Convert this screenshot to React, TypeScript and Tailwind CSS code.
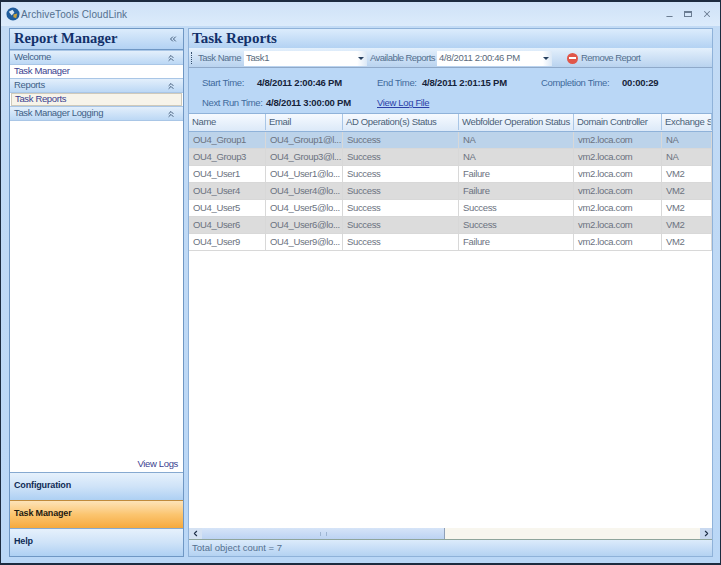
import { ChevronLeft, ChevronRight, ChevronsLeft, ChevronsUp, Minus, X } from 'lucide-react';

const columns = [
    { title: 'Name', width: 'w-[77px]' },
    { title: 'Email', width: 'w-[77px]' },
    { title: 'AD Operation(s) Status', width: 'w-[116px]' },
    { title: 'Webfolder Operation Status', width: 'w-[115px]' },
    { title: 'Domain Controller', width: 'w-[88px]' },
    { title: 'Exchange S', width: 'w-[50px]' },
];

const rows = [
    ['OU4_Group1', 'OU4_Group1@l...', 'Success', 'NA', 'vm2.loca.com', 'NA'],
    ['OU4_Group3', 'OU4_Group3@l...', 'Success', 'NA', 'vm2.loca.com', 'NA'],
    ['OU4_User1', 'OU4_User1@lo...', 'Success', 'Failure', 'vm2.loca.com', 'VM2'],
    ['OU4_User4', 'OU4_User4@lo...', 'Success', 'Failure', 'vm2.loca.com', 'VM2'],
    ['OU4_User5', 'OU4_User5@lo...', 'Success', 'Success', 'vm2.loca.com', 'VM2'],
    ['OU4_User6', 'OU4_User6@lo...', 'Success', 'Success', 'vm2.loca.com', 'VM2'],
    ['OU4_User9', 'OU4_User9@lo...', 'Success', 'Failure', 'vm2.loca.com', 'VM2'],
];

function GroupHeader({ title }: { title: string }) {
    return (
        <div className="flex h-[15px] items-center justify-between border-y border-[#a9c6e6] bg-gradient-to-b from-[#e3effb] to-[#bcd8f5] pl-1 pr-[7px] text-[#3f5f86]">
            <span>{title}</span>
            <ChevronsUp size={10} strokeWidth={2} className="text-[#27405f]" />
        </div>
    );
}

function OutlookButton({ title, active }: { title: string; active?: boolean }) {
    return (
        <div
            className={`flex h-[28px] items-center border-t px-[4px] pb-[2px] text-[9px] font-bold tracking-[-0.15px] ${
                active
                    ? 'border-[#c08a3c] bg-gradient-to-b from-[#fde3b8] via-[#fbc56f] to-[#f6a93a] text-[#1f1a10]'
                    : 'border-[#86a9d0] bg-gradient-to-b from-[#e6f1fc] via-[#cfe3f8] to-[#aed0f3] text-[#0e2a55]'
            }`}
        >
            {title}
        </div>
    );
}

function InfoLabel({ label, value, labelClass, valueClass }: { label: string; value: string; labelClass: string; valueClass: string }) {
    return (
        <div className="flex items-center whitespace-nowrap">
            <span className={`${labelClass} text-[#3f6a9c]`}>{label}</span>
            <span className={`${valueClass} font-bold tracking-[-0.2px] text-[#16233a]`}>{value}</span>
        </div>
    );
}

export default function App() {
    return (
        <div className="flex h-[565px] w-[721px] flex-col overflow-hidden border-y-2 border-x border-[#1c2b3f] bg-gradient-to-b from-[#c3dbf5] to-[#bad7f6] font-['Liberation_Sans',sans-serif] text-[9.5px] tracking-[-0.35px]">
            {/* Title bar */}
            <div className="flex h-[24px] shrink-0 items-center justify-between bg-gradient-to-b from-[#cfe2f7] to-[#dcebfb] pl-[5px] pr-[8px]">
                <div className="flex items-center gap-[1px]">
                    <svg width="14" height="14" viewBox="0 0 15 15">
                        <circle cx="7.5" cy="7.5" r="7" fill="#1f5d9c" />
                        <path d="M3 5 L7 3 L9 6 L6 9 Z" fill="#d9e8f5" />
                        <path d="M8 8 L12 7 L11 12 L8 11 Z" fill="#c9a13b" />
                    </svg>
                    <span className="text-[10px] tracking-[0.1px] text-[#54708f]">ArchiveTools CloudLink</span>
                </div>
                <div className="flex items-center gap-[10px] text-[#6b7d92]">
                    <Minus size={9} strokeWidth={3} className="mt-1" />
                    <div className="h-[6px] w-[8px] border border-t-2 border-[#6b7d92]" />
                    <X size={10} strokeWidth={2.5} />
                </div>
            </div>

            <div className="flex min-h-0 flex-1 gap-[4px] pb-[6px] pl-[8px] pr-[7px] pt-[2px]">
                {/* Left panel */}
                <div className="flex w-[175px] shrink-0 flex-col border border-[#6f97c4] bg-white">
                    <div className="flex h-[20px] shrink-0 items-center justify-between bg-gradient-to-b from-[#dcecfc] to-[#b3d2f3] pl-[4px] pr-[5px]">
                        <span className="font-['Liberation_Serif',serif] text-[14.5px] font-bold tracking-normal text-[#12306a]">Report Manager</span>
                        <ChevronsLeft size={10} strokeWidth={2} className="text-[#27405f]" />
                    </div>
                    <div className="h-px bg-[#6f97c4]" />
                    <GroupHeader title="Welcome" />
                    <div className="flex h-[13px] items-center pl-1 text-[#3b3f8f]">Task Manager</div>
                    <GroupHeader title="Reports" />
                    <div className="mx-px flex h-[13px] items-center border border-[#cfcabb] bg-[#f7f4ea] pl-[3px] text-[#3b3f8f]">Task Reports</div>
                    <GroupHeader title="Task Manager Logging" />
                    <div className="flex flex-1 items-end justify-end pb-[1px] pr-[5px]">
                        <span className="text-[#3b3f8f]">View Logs</span>
                    </div>
                    <OutlookButton title="Configuration" />
                    <OutlookButton title="Task Manager" active />
                    <OutlookButton title="Help" />
                </div>

                {/* Right panel */}
                <div className="flex min-w-0 flex-1 flex-col border border-[#8fb2d9] bg-[#bad7f6]">
                    <div className="flex h-[19px] shrink-0 items-center bg-gradient-to-b from-[#dcecfc] to-[#b3d2f3] pl-[3px]">
                        <span className="font-['Liberation_Serif',serif] text-[15px] font-bold tracking-normal text-[#12306a]">Task Reports</span>
                    </div>
                    {/* Toolbar */}
                    <div className="flex h-[20px] shrink-0 items-center border-b border-[#8fa9c9] bg-gradient-to-b from-[#e4f0fc] to-[#b9d3ef] pl-[2px] pt-[1px] text-[#54708f]">
                        <div className="mr-[6px] h-[12px] w-px border-l border-dotted border-[#35506f]" />
                        <span className="w-[46px] tracking-[-0.5px]">Task Name</span>
                        <div className="flex h-[15px] w-[123px] items-center justify-between bg-gradient-to-r from-white from-[92%] to-[#dbe8f6] pl-[2px] pr-[3px] text-[#5a6a7c]">
                            <span>Task1</span>
                            <span className="h-0 w-0 border-x-[3px] border-t-[3px] border-x-transparent border-t-[#27405f]" />
                        </div>
                        <span className="ml-[3px] w-[67px] whitespace-nowrap tracking-[-0.55px]">Available Reports</span>
                        <div className="flex h-[15px] w-[115px] items-center justify-between bg-gradient-to-r from-white from-[92%] to-[#dbe8f6] pl-[2px] pr-[3px] text-[#5a6a7c]">
                            <span>4/8/2011 2:00:46 PM</span>
                            <span className="h-0 w-0 border-x-[3px] border-t-[3px] border-x-transparent border-t-[#27405f]" />
                        </div>
                        <div className="ml-[15px] flex items-center gap-[3px]">
                            <span className="flex h-[11px] w-[11px] items-center justify-center rounded-full bg-[#e0574a]">
                                <span className="h-[2px] w-[7px] bg-white" />
                            </span>
                            <span className="tracking-[-0.55px]">Remove Report</span>
                        </div>
                    </div>
                    {/* Details */}
                    <div className="flex h-[45px] shrink-0 flex-col gap-[6px] pl-[13px] pt-[8px]">
                        <div className="flex items-center">
                            <InfoLabel label="Start Time:" value="4/8/2011 2:00:46 PM" labelClass="w-[55px]" valueClass="w-[120px]" />
                            <InfoLabel label="End Time:" value="4/8/2011 2:01:15 PM" labelClass="w-[45px]" valueClass="w-[119px]" />
                            <InfoLabel label="Completion Time:" value="00:00:29" labelClass="w-[81px]" valueClass="" />
                        </div>
                        <div className="flex items-center">
                            <InfoLabel label="Next Run Time:" value="4/8/2011 3:00:00 PM" labelClass="w-[64px]" valueClass="w-[111px]" />
                            <span className="text-[#2b3fa8] underline">View Log File</span>
                        </div>
                    </div>
                    {/* Grid */}
                    <div className="flex min-h-0 flex-1 flex-col overflow-hidden border-t border-[#8fb2d9] bg-white">
                        <div className="flex h-[18px] shrink-0 border-b border-[#8fb2d9] bg-gradient-to-b from-[#f6faff] to-[#dce9f8] pb-[1px] text-[#4a5f78]">
                            {columns.map((col) => (
                                <div key={col.title} className={`${col.width} flex shrink-0 items-center overflow-hidden whitespace-nowrap border-r border-[#a9c6e6] pl-[3px]`}>
                                    {col.title}
                                </div>
                            ))}
                        </div>
                        {rows.map((row, i) => (
                            <div
                                key={row[0]}
                                className={`flex h-[17px] shrink-0 text-[#6b7280] ${i === 0 ? 'bg-[#bcd3ea]' : i % 2 === 1 ? 'bg-[#dcdcdc]' : 'bg-white'}`}
                            >
                                {row.map((cell, j) => (
                                    <div key={j} className={`${columns[j].width} flex shrink-0 items-center overflow-hidden whitespace-nowrap border-b border-r border-[#d8d8d8] pl-[4px]`}>
                                        {cell}
                                    </div>
                                ))}
                            </div>
                        ))}
                        <div className="flex-1" />
                        {/* Scrollbar */}
                        <div className="flex h-[12px] shrink-0 items-center border-b border-[#8fa59b] bg-[#f8f6ee]">
                            <div className="flex h-[11px] w-[13px] items-center justify-center bg-[#d5e2f3] text-[#1f2f48]">
                                <ChevronLeft size={9} strokeWidth={3} />
                            </div>
                            <div className="flex h-[11px] w-[243px] items-center justify-center border-r border-[#8fa0b8] bg-gradient-to-b from-[#d6e4f8] to-[#bcd3f2]">
                                <div className="h-[4px] w-[7px] border-x border-[#9db5d2]" />
                            </div>
                            <div className="flex-1" />
                            <div className="flex h-[11px] w-[12px] items-center justify-center bg-[#c9d9f0] text-[#1f2f48]">
                                <ChevronRight size={9} strokeWidth={3} />
                            </div>
                        </div>
                    </div>
                    {/* Status */}
                    <div className="flex h-[16px] shrink-0 items-center bg-gradient-to-b from-[#dcebfb] to-[#b4d2f2] pl-[3px] tracking-normal text-[#54708f]">
                        Total object count = 7
                    </div>
                </div>
            </div>
        </div>
    );
}
